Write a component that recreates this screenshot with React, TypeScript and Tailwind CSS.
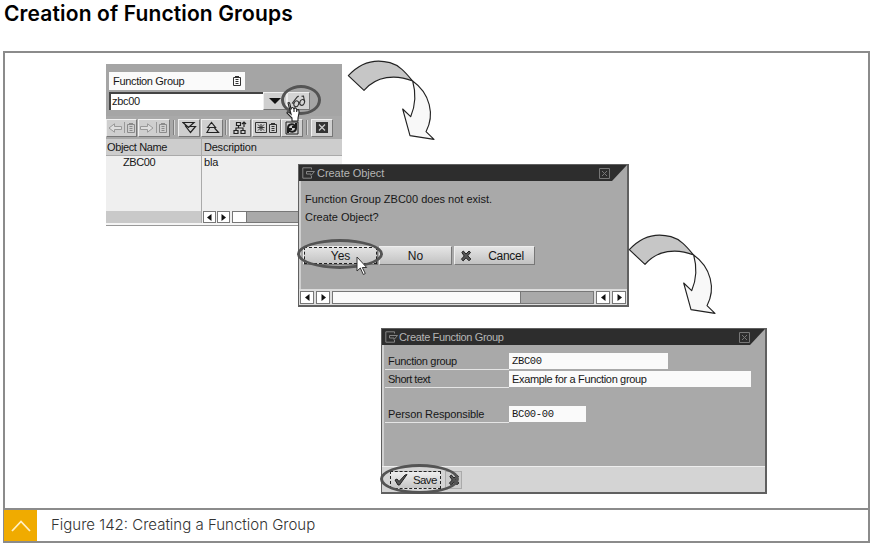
import type { ReactNode } from "react";

const SANS = "font-['Liberation_Sans',Arial,sans-serif]";

function SwoopArrow({ className }: { className: string }) {
  return (
    <svg className={`absolute ${className}`} width="110" height="100" viewBox="0 0 330 300" stroke="#222" strokeWidth="3.4" strokeLinejoin="round">
      <path d="M25 77C70 28 120 30 150 38C180 46 200 72 218 93C166 72 109 78 72 121Z" fill="#c6c6c6" />
      <path d="M218 93C270 130 285 194 258 245L282 268L210 257L188 177L212 200C228 163 227 125 218 93Z" fill="#f8f8f8" />
    </svg>
  );
}

function Ring({ className }: { className: string }) {
  return <div className={`absolute rounded-[50%] border-[3px] border-[#545454] ${className}`} />;
}

function PageIcon({ faded = false }: { faded?: boolean }) {
  return (
    <svg width="9" height="10" viewBox="0 0 9 10" fill="none" stroke={faded ? "#8b8b8b" : "#333"} strokeWidth="1">
      <path d="M.5 1.5h7v8h-7zM2 .5h4M2.5 3.5h3M2.5 5.5h3M2.5 7.5h3" />
    </svg>
  );
}

function CrossIcon() {
  return (
    <svg width="12" height="12" viewBox="0 0 12 12" fill="none">
      <path d="M1.8 2.4L3.3 1L6 4L9 1L10.5 2.4L7.8 5.8L10.8 9L9 10.8L6 7.8L3.2 10.9L1.4 9.2L4.2 6Z" fill="#555" stroke="#222" />
    </svg>
  );
}

function ScrollButton({ right = false, className = "w-[13px]" }: { right?: boolean; className?: string }) {
  return (
    <div className={`flex h-full shrink-0 items-center justify-center border border-[#777] bg-white ${className}`}>
      <svg width="5" height="7" viewBox="0 0 5 7" fill="#111">
        {right ? <path d="M.5 0L5 3.5L.5 7Z" /> : <path d="M4.5 0L0 3.5L4.5 7Z" />}
      </svg>
    </div>
  );
}

function ToolButton({ children, className }: { children: ReactNode; className: string }) {
  return (
    <div className={`flex h-[18px] shrink-0 items-center justify-center border border-r-[#777] border-b-[#777] border-t-[#f0f0f0] border-l-[#f0f0f0] bg-[#cfcfcf] ${className}`}>
      {children}
    </div>
  );
}

function Separator({ className }: { className: string }) {
  return <div className={`h-[15px] w-[2px] shrink-0 border-l border-[#808080] bg-[#d5d5d5] ${className}`} />;
}

function FadedArrow({ right = false }: { right?: boolean }) {
  return (
    <svg width="14" height="10" viewBox="0 0 14 10" fill="#dedede" stroke="#999">
      <path d={right ? "M.5 3.5h7V.8L13 5L7.5 9.2V6.5h-7z" : "M13.5 3.5h-7V.8L1 5L6.5 9.2V6.5h7z"} />
    </svg>
  );
}

function TitleBar({ title, textClass, closeClass }: { title: string; textClass: string; closeClass: string }) {
  return (
    <div className="flex h-[16px] shrink-0 items-center bg-[#2d2d2d] pl-[3px] [clip-path:polygon(0_0,100%_0,calc(100%-15px)_100%,0_100%)]">
      <svg width="13" height="12" viewBox="0 0 13 12" fill="none" stroke="#858585">
        <path d="M9.5 2.5V.8H.8v10.4h8.7V9M4.5 4.5h8L9 8.5V7H4.5z" />
      </svg>
      <span className={`grow text-[11px] leading-4 text-[#b5b5b5] ${textClass}`}>{title}</span>
      <svg className={closeClass} width="11" height="11" viewBox="0 0 11 11" fill="none" stroke="#777">
        <path d="M.5 .5h10v10H.5zM3 3l5 5M8 3l-5 5" />
      </svg>
    </div>
  );
}

function ObjectBrowser() {
  return (
    <section className="absolute left-[106px] top-[64px] flex h-[162px] w-[236px] flex-col border-b border-[#999] bg-[#f5f5f5]">
      <div className="flex h-[52px] flex-col bg-[#a5a5a5] pl-[3px] pt-[8px]">
        <div className="flex h-[18px] w-[136px] items-center justify-between bg-[#fafafa] pl-[4px] pr-[3px]">
          <span className="tracking-[-0.32px]">Function Group</span>
          <PageIcon />
        </div>
        <div className="mt-[2px] flex h-[18px]">
          <div className="flex w-[154px] items-center border-l-2 border-t-2 border-[#444] bg-white pb-[2px] pl-[1px] tracking-[-0.3px]">zbc00</div>
          <div className="flex w-[24px] items-center justify-center border border-[#eee] border-b-[#777] bg-[#cfcfcf]">
            <svg width="12" height="6" viewBox="0 0 12 6" fill="#111"><path d="M0 0h12L6 6z" /></svg>
          </div>
          <div className="flex w-[23px] items-center justify-center border border-[#eee] border-b-[#777] border-r-[#777] bg-[#d4d4d4]">
            <svg width="17" height="14" viewBox="0 0 17 14" fill="none" stroke="#333" strokeWidth="1.1">
              <ellipse cx="6.3" cy="9.8" rx="2.3" ry="3" transform="rotate(20 6.3 9.8)" />
              <ellipse cx="12.2" cy="8.4" rx="2.3" ry="3" transform="rotate(20 12.2 8.4)" />
              <path d="M3.8 9.5L2.5 9L7.2 3l1.5-1M8.6 9l1.2-.8M14.4 7L13.5 2l-2 .2" />
            </svg>
          </div>
        </div>
      </div>
      <div className="flex h-[23px] items-center bg-[#a9a9a9]">
        <ToolButton className="w-[31px] gap-[2px]"><FadedArrow /><i className="h-[11px] w-px bg-[#999]" /><PageIcon faded /></ToolButton>
        <ToolButton className="ml-px w-[32px] gap-[2px]"><FadedArrow right /><i className="h-[11px] w-px bg-[#999]" /><PageIcon faded /></ToolButton>
        <Separator className="mx-[3px]" />
        <ToolButton className="w-[22px]">
          <svg width="15" height="13" viewBox="0 0 15 13" fill="none" stroke="#222" strokeWidth="1.2"><path d="M1 1.5h11L6.5 6.5zM3 4.5L8.5 11.5L13.5 5.5H8" /></svg>
        </ToolButton>
        <ToolButton className="ml-px w-[22px]">
          <svg width="15" height="13" viewBox="0 0 15 13" fill="none" stroke="#222" strokeWidth="1.2"><path d="M2.5 6.5L6.5 1.5L10.5 6.5zM4.5 7L2 11.5h11.5L9.5 7" /></svg>
        </ToolButton>
        <Separator className="ml-[2px] mr-[2px]" />
        <ToolButton className="w-[22px]">
          <svg width="14" height="14" viewBox="0 0 14 14" fill="none" stroke="#222" strokeWidth="1.2"><path d="M3.5 1.5h4v3h-4zM1 9.5h4v3H1zM8 9.5h4v3H8zM5.5 4.5V7M3 9.5V7h7v2.5M11 6V1M9 3l2-2l2 2" /></svg>
        </ToolButton>
        <ToolButton className="ml-px w-[29px] gap-px">
          <svg width="13" height="13" viewBox="0 0 13 13" fill="none" stroke="#333"><path d="M.5 1.5h11v10H.5zM3 3.5l6 6M9 3.5l-6 6M2.5 6.5h7M6 3v7" /></svg>
          <PageIcon />
        </ToolButton>
        <ToolButton className="w-[22px]">
          <svg width="14" height="14" viewBox="0 0 14 14" fill="none" stroke="#1c1c1c" strokeWidth="2"><path d="M1 1h12v12H1z" strokeWidth="1" /><path d="M3 7C3 3 8 2 10 5M11 2v4H7M11 7C11 11 6 12 4 9M3 12V8h4" /></svg>
        </ToolButton>
        <Separator className="mx-[3px]" />
        <ToolButton className="w-[22px]">
          <svg width="12" height="11" viewBox="0 0 12 11"><path d="M0 0h12v11H0z" fill="#333" /><path d="M3 2.5l6 6M9 2.5l-6 6" stroke="#ccc" strokeWidth="1.3" /></svg>
        </ToolButton>
      </div>
      <div className="flex h-[17px] items-center border-b border-[#aaa] bg-[#cdcdcd]">
        <span className="flex h-full w-[96px] items-center border-r border-[#aaa] pl-px tracking-[-0.38px]">Object Name</span>
        <span className="pl-[2px] tracking-[-0.22px]">Description</span>
      </div>
      <div className="flex h-[67px] bg-[#efefef]">
        <div className="flex w-[96px] shrink-0 flex-col justify-between border-r border-[#aaa]">
          <span className="pl-[17px] leading-[13px] tracking-[-0.4px]">ZBC00</span>
          <div className="h-[12px] bg-[#c9c9c9]" />
        </div>
        <div className="flex grow flex-col justify-between">
          <span className="pl-[2px] leading-[13px] tracking-[-0.2px]">bla</span>
          <div className="flex h-[12px] pl-[1px]">
            <ScrollButton /><ScrollButton right className="ml-[1px] w-[13px]" />
            <div className="ml-[2px] flex grow border border-[#777] bg-[#a9a9a9]"><div className="w-[14px] border-r border-[#777] bg-white" /></div>
          </div>
        </div>
      </div>
    </section>
  );
}

function ConfirmButton({ children, className }: { children: ReactNode; className: string }) {
  return (
    <div className={`flex h-[19px] items-center justify-center border border-[#eee] border-b-[#777] border-r-[#777] bg-linear-to-b from-[#e5e5e5] to-[#c2c2c2] text-[12px] ${className}`}>
      {children}
    </div>
  );
}

function CreateObjectDialog() {
  return (
    <section className="absolute left-[298px] top-[164px] flex h-[143px] w-[331px] flex-col border border-b-2 border-r-2 border-[#606060] bg-[#a9a9a9]">
      <TitleBar title="Create Object" textClass="pl-[2px] tracking-[-0.05px]" closeClass="mr-[17px]" />
      <div className="flex grow flex-col border-l-2 border-[#d0d0d0] pl-[4px] pt-[9px]">
        <p className="h-[19px] leading-[18px] tracking-[0px]">Function Group ZBC00 does not exist.</p>
        <p className="h-[19px] leading-[17px] tracking-[-0.02px]">Create Object?</p>
        <div className="-ml-[2px] mt-[18px] flex">
          <ConfirmButton className="w-[75px] tracking-[-0.1px]"><span className="flex h-full w-full items-center justify-center border border-dashed border-[#222]">Yes</span></ConfirmButton>
          <ConfirmButton className="ml-px w-[73px]">No</ConfirmButton>
          <ConfirmButton className="ml-[2px] w-[81px] gap-[16px] pr-[5px] tracking-[-0.3px]"><CrossIcon />Cancel</ConfirmButton>
        </div>
      </div>
      <div className="flex h-[16px] shrink-0 border-t border-[#ddd] bg-[#dedede] px-px py-px">
        <ScrollButton className="w-[14px]" />
        <ScrollButton right className="ml-[2px] w-[14px]" />
        <div className="mx-[2px] flex grow border border-[#777] bg-[#a9a9a9]"><div className="w-[188px] border-r border-[#777] bg-[#fafafa]" /></div>
        <ScrollButton className="w-[14px]" />
        <ScrollButton right className="ml-[2px] w-[14px]" />
      </div>
    </section>
  );
}

function Field({ label, value, labelClass, valueClass }: { label: string; value: string; labelClass: string; valueClass: string }) {
  return (
    <div className="flex h-[17px]">
      <span className={`flex w-[124px] shrink-0 items-center border-b border-[#e5e5e5] pl-[3px] leading-4 ${labelClass}`}>{label}</span>
      <span className={`flex h-[16px] items-center bg-[#fafafa] pl-[3px] ${valueClass}`}>{value}</span>
    </div>
  );
}

function CreateGroupDialog() {
  const mono = "font-['Liberation_Mono',monospace]";
  return (
    <section className="absolute left-[381px] top-[328px] flex h-[166px] w-[386px] flex-col border border-b-2 border-r-2 border-[#606060] bg-[#a9a9a9]">
      <TitleBar title="Create Function Group" textClass="pl-px tracking-[-0.35px]" closeClass="mr-[15px]" />
      <div className="flex grow flex-col border-l-2 border-[#d0d0d0] pl-px pt-[8px]">
        <Field label="Function group" value="ZBC00" labelClass="tracking-[-0.32px]" valueClass={`w-[159px] text-[10.5px] tracking-[-0.35px] ${mono}`} />
        <div className="h-px" />
        <Field label="Short text" value="Example for a Function group" labelClass="tracking-[-0.5px]" valueClass="w-[242px] tracking-[-0.35px]" />
        <div className="h-[18px]" />
        <Field label="Person Responsible" value="BC00-00" labelClass="tracking-[-0.12px]" valueClass={`w-[77px] text-[10.5px] tracking-[-0.35px] ${mono}`} />
      </div>
      <div className="flex h-[26px] shrink-0 items-center border-t border-[#eee] bg-[#d4d4d4] pl-[8px]">
        <div className="flex h-[18px] w-[51px] items-center gap-[5px] border border-dashed border-[#222] bg-linear-to-b from-[#eee] to-[#c5c5c5] pl-[3px] tracking-[-0.6px] text-[11.5px]">
          <svg width="14" height="13" viewBox="0 0 14 13"><path d="M1 7l2-1l2 2.5L11 2l2-.5L5.5 12H4z" fill="#555" stroke="#222" /></svg>
          Save
        </div>
        <div className="ml-[4px] flex h-[18px] w-[17px] items-center justify-center border border-[#aaa] bg-[#ccc]"><CrossIcon /></div>
      </div>
    </section>
  );
}

export default function App() {
  return (
    <main className={`relative flex h-[547px] w-[871px] flex-col overflow-hidden bg-white text-[11px] leading-[14px] text-[#171717] whitespace-nowrap ${SANS}`}>
      <h1 className="h-[51px] pl-[4px] font-['Inter',sans-serif] text-[21px] leading-[28px] font-semibold tracking-[0.13px] text-black">Creation of Function Groups</h1>
      <figure className="ml-[3px] flex h-[492px] w-[867px] flex-col border-2 border-[#8b8b8b]">
        <div className="grow">
          <ObjectBrowser />
          <CreateObjectDialog />
          <CreateGroupDialog />
          <SwoopArrow className="left-[340px] top-[50px]" />
          <SwoopArrow className="left-[621px] top-[224px]" />
          <Ring className="left-[281px] top-[85px] h-[30px] w-[40px]" />
          <Ring className="left-[297px] top-[239px] h-[30px] w-[86px]" />
          <Ring className="left-[380px] top-[464px] h-[30px] w-[79px]" />
          <svg className="absolute left-[286px] top-[101px]" width="15" height="22" viewBox="0 0 15 22" fill="white" stroke="#222" strokeWidth="1.1">
            <path d="M2 2c2-2 2 2 3 6c1-2 2-2 3 0c1-2 2-1 3 1c2-1 2 0 2 3l-1 5v3H6v-3L1 12c0-2 2-1 4 1zM8 8v3M10.7 9v2" />
          </svg>
          <svg className="absolute left-[356px] top-[256px]" width="13" height="20" viewBox="0 0 13 20" fill="white" stroke="#333">
            <path d="M1 1v14l3.3-3l3 6.5l2-1l-3-6h4.4z" />
          </svg>
        </div>
        <figcaption className="flex h-[33px] shrink-0 border-t-2 border-[#8b8b8b]">
          <div className="-ml-px flex w-[33px] shrink-0 items-center justify-center bg-[#f0ab00]">
            <svg width="20" height="12" viewBox="0 0 20 12" fill="none" stroke="#fff0c5" strokeWidth="1.8"><path d="M1 11L10 1.5L19 11" /></svg>
          </div>
          <span className="pl-[14px] font-['Inter',sans-serif] text-[15px] leading-[29px] font-light tracking-[0px] text-[#333]">Figure 142: Creating a Function Group</span>
        </figcaption>
      </figure>
    </main>
  );
}
